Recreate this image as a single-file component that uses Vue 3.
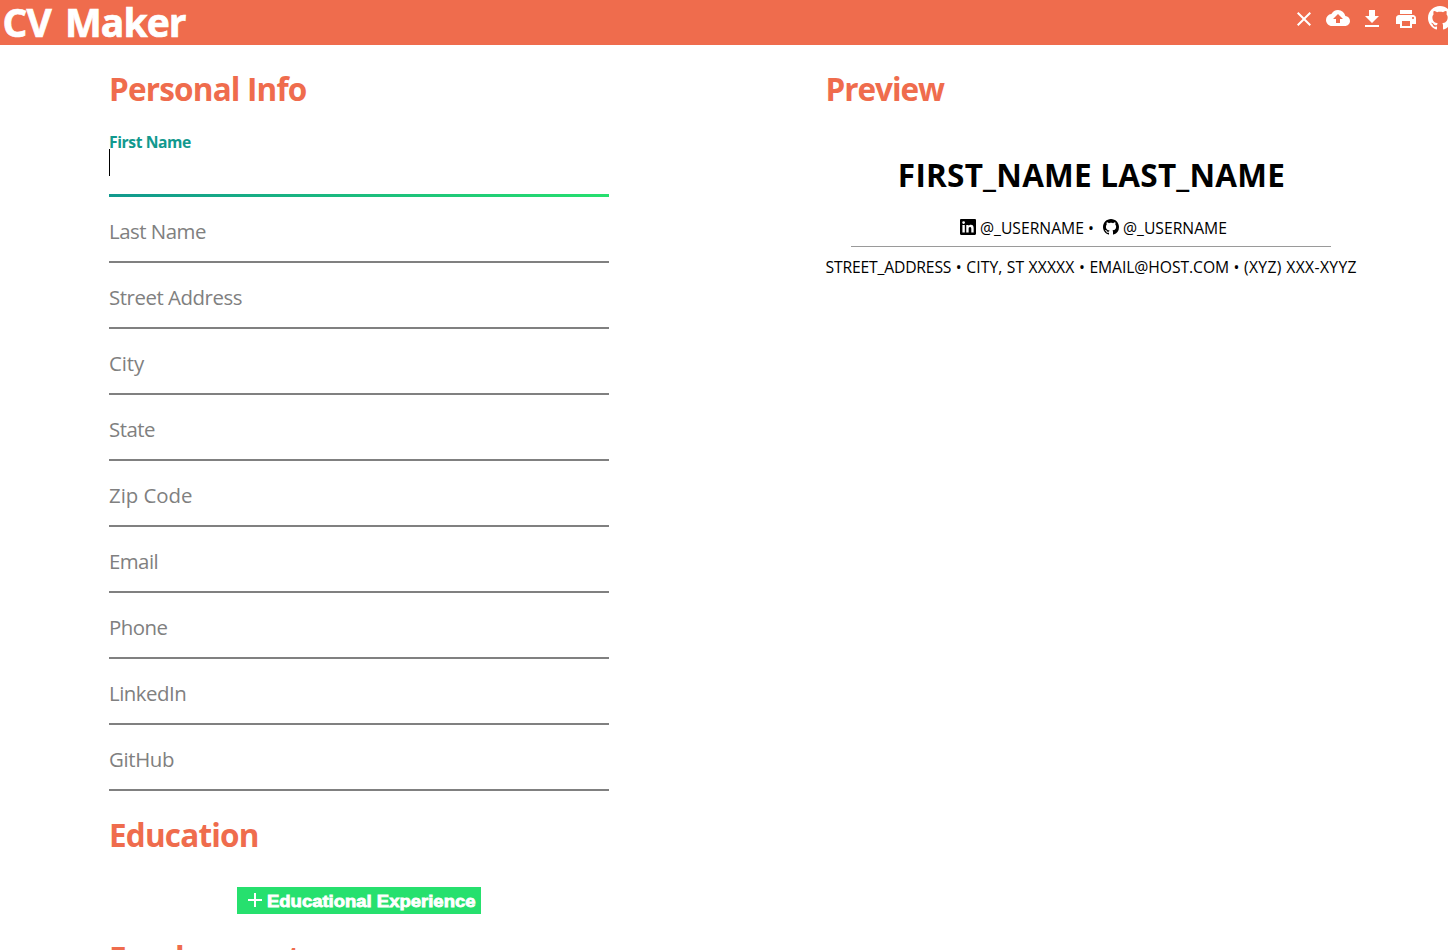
<script setup>
import { ref } from 'vue'

const fields = ref([
  { label: 'First Name', tracking: -0.42, active: true },
  { label: 'Last Name', tracking: -0.48 },
  { label: 'Street Address', tracking: -0.45 },
  { label: 'City', tracking: -0.1 },
  { label: 'State', tracking: -0.5 },
  { label: 'Zip Code', tracking: -0.03 },
  { label: 'Email', tracking: -0.55 },
  { label: 'Phone', tracking: -0.5 },
  { label: 'LinkedIn', tracking: -0.48 },
  { label: 'GitHub', tracking: -0.35 },
])

const contact = ref([
  { text: 'STREET_ADDRESS', tracking: -0.17 },
  { text: 'CITY, ST XXXXX', tracking: 0.14 },
  { text: 'EMAIL@HOST.COM', tracking: -0.07 },
  { text: '(XYZ) XXX-XYYZ', tracking: 0.36 },
])

const githubPath =
  'M8 0C3.58 0 0 3.58 0 8c0 3.54 2.29 6.53 5.47 7.59.4.07.55-.17.55-.38 0-.19-.01-.82-.01-1.49-2.01.37-2.53-.49-2.69-.94-.09-.23-.48-.94-.82-1.13-.28-.15-.68-.52-.01-.53.63-.01 1.08.58 1.23.82.72 1.21 1.87.87 2.33.66.07-.52.28-.87.51-1.07-1.78-.2-3.64-.89-3.64-3.95 0-.87.31-1.59.82-2.15-.08-.2-.36-1.02.08-2.12 0 0 .67-.21 2.2.82.64-.18 1.32-.27 2-.27.68 0 1.36.09 2 .27 1.53-1.04 2.2-.82 2.2-.82.44 1.1.16 1.92.08 2.12.51.56.82 1.27.82 2.15 0 3.07-1.87 3.75-3.65 3.95.29.25.54.73.54 1.48 0 1.07-.01 1.93-.01 2.2 0 .21.15.46.55.38A8.013 8.013 0 0 0 16 8c0-4.42-3.58-8-8-8z'
</script>

<template>
  <div class="page">
    <header class="bar">
      <h1 class="brand">CV Maker</h1>
      <nav class="tools">
        <svg viewBox="0 0 24 24"><path d="M19 6.41L17.59 5 12 10.59 6.41 5 5 6.41 10.59 12 5 17.59 6.41 19 12 13.41 17.59 19 19 17.59 13.41 12z" /></svg>
        <svg class="raised" viewBox="0 0 24 24"><path d="M19.35 10.04A7.49 7.49 0 0 0 12 4C9.11 4 6.6 5.64 5.35 8.04A5.994 5.994 0 0 0 0 14c0 3.31 2.69 6 6 6h13c2.76 0 5-2.24 5-5 0-2.64-2.05-4.78-4.65-4.96zM14 13v4h-4v-4H7l5-5 5 5h-3z" /></svg>
        <svg viewBox="0 0 24 24"><path d="M19 9h-4V3H9v6H5l7 7 7-7zM5 18v2h14v-2H5z" /></svg>
        <svg viewBox="0 0 24 24"><path d="M19 8H5c-1.66 0-3 1.34-3 3v6h4v4h12v-4h4v-6c0-1.66-1.34-3-3-3zm-3 11H8v-5h8v5zm3-7c-.55 0-1-.45-1-1s.45-1 1-1 1 .45 1 1-.45 1-1 1zm-1-9H6v4h12V3z" /></svg>
        <svg class="raised" viewBox="0 0 16 16"><path :d="githubPath" /></svg>
      </nav>
    </header>

    <main class="columns">
      <section class="form">
        <h2 class="heading">Personal Info</h2>
        <div class="fields">
          <div v-for="f in fields" :key="f.label" class="field" :class="{ active: f.active }">
            <span class="label" :style="{ letterSpacing: f.tracking + 'px' }">{{ f.label }}</span>
            <i v-if="f.active" class="caret"></i>
          </div>
        </div>
        <h2 class="heading">Education</h2>
        <button class="add">
          <svg viewBox="0 0 14 14"><path d="M7 0v14M0 7h14" /></svg>
          <span class="add-text">Educational Experience</span>
        </button>
        <h2 class="heading">Employment</h2>
      </section>

      <section class="preview">
        <h2 class="heading">Preview</h2>
        <h1 class="name">FIRST_NAME LAST_NAME</h1>
        <div class="social">
          <svg viewBox="0 0 16 16"><path fill-rule="evenodd" d="M1.200 0h13.600C15.500 0 16 .5 16 1.200v13.600c0 .7-.5 1.200-1.200 1.200H1.200C.5 16 0 15.500 0 14.800V1.200C0 .5.5 0 1.200 0zM2.400 6v7.600h2.400V6zM3.600 2.200a1.400 1.400 0 1 0 0 2.800 1.400 1.400 0 0 0 0-2.800zM6.250 6v7.600h2.400V9.850c0-1 .2-1.950 1.400-1.950s1.250 1.100 1.250 2v3.700h2.350V9.450c0-2.050-.45-3.650-2.850-3.650-1.150 0-1.900.65-2.250 1.250V6z" /></svg>
          <span class="user">@_USERNAME</span>
          <span class="dot">•</span>
          <svg viewBox="0 0 16 16"><path :d="githubPath" /></svg>
          <span class="user">@_USERNAME</span>
        </div>
        <hr class="rule" />
        <div class="address">
          <template v-for="(c, i) in contact" :key="c.text">
            <span v-if="i" class="sep">•</span>
            <span :style="{ letterSpacing: c.tracking + 'px' }">{{ c.text }}</span>
          </template>
        </div>
      </section>
    </main>
  </div>
</template>

<style>
body {
  overflow: hidden;
  background: #fff;
}
</style>

<style scoped>
.page {
  width: 1448px;
  height: 950px;
  overflow: hidden;
  font-family: "Segoe UI", "Open Sans", "Noto Sans", sans-serif;
  color: #000;
}
.bar {
  display: flex;
  justify-content: space-between;
  height: 45px;
  background: #ef6c4d;
  color: #fff;
}
.brand {
  margin: 0 0 0 2.500px;
  font-size: 39px;
  line-height: 44px;
  font-weight: 700;
  letter-spacing: -0.950px;
  word-spacing: 5px;
  -webkit-text-stroke: 0.700px currentColor;
  white-space: nowrap;
}
.tools {
  display: flex;
  flex: none;
  gap: 10px;
  padding-top: 7px;
  margin-right: -4px;
}
.tools svg {
  width: 24px;
  height: 24px;
  fill: currentColor;
}
.tools .raised {
  margin-top: -1px;
}
.columns {
  display: flex;
}
.form {
  width: 500px;
  margin-left: 109px;
  display: flex;
  flex-direction: column;
}
.heading {
  margin: 22px 0 0;
  height: 45px;
  font-size: 31.500px;
  line-height: 44px;
  font-weight: 700;
  letter-spacing: -0.820px;
  color: #ef6c4d;
  white-space: nowrap;
}
.fields {
  padding-top: 19px;
}
.field {
  position: relative;
  height: 64px;
  border-bottom: 2px solid gray;
  font-size: 20.400px;
  color: gray;
  white-space: nowrap;
}
.field .label {
  display: block;
  padding-top: 20px;
  line-height: 28px;
}
.field.active {
  height: 63px;
  border-bottom: 3px solid;
  border-image: linear-gradient(to right, #11998e, #26e06e) 1;
}
.field.active .label {
  padding-top: 0;
  font-size: 15.700px;
  line-height: 22px;
  font-weight: 700;
  color: #11998e;
}
.caret {
  position: absolute;
  left: 0;
  top: 18px;
  width: 1px;
  height: 27px;
  background: #000;
}
.add {
  display: flex;
  align-items: center;
  align-self: center;
  width: 244px;
  height: 27px;
  margin-top: 29px;
  padding: 0 0 0 11px;
  gap: 5px;
  border: 0;
  background: #26e06e;
  color: #fff;
  font: 700 16px/25px "Liberation Sans", Arial, sans-serif;
  white-space: nowrap;
}
.add svg {
  flex: none;
  width: 14px;
  height: 14px;
  margin-top: -1px;
  fill: none;
  stroke: currentColor;
  stroke-width: 2;
}
.add-text {
  padding-top: 2px;
  transform: scaleX(1.155);
  transform-origin: left center;
  -webkit-text-stroke: 0.800px currentColor;
}
.preview {
  width: 531px;
  margin-left: 217px;
}
.preview .heading {
  margin-left: -0.500px;
  letter-spacing: -1.050px;
}
.name {
  margin: 41px 0 0;
  font-size: 31.500px;
  line-height: 44px;
  font-weight: 700;
  letter-spacing: 0.230px;
  text-align: center;
  white-space: nowrap;
}
.social {
  display: flex;
  align-items: flex-start;
  margin: 22px 0 0 134px;
  height: 27px;
  font-size: 15.700px;
  line-height: 18px;
}
.social svg {
  flex: none;
  width: 16px;
  height: 16px;
}
.user {
  width: 103px;
  margin-left: 4px;
  white-space: nowrap;
}
.dot {
  width: 6px;
  margin: 0 9px 0 5px;
}
.rule {
  width: 480px;
  height: 1px;
  margin: 0 25px;
  border: 0;
  background: #9a9a9a;
}
.address {
  display: flex;
  justify-content: space-between;
  margin: 9px 0 0 -0.500px;
  font-size: 15.700px;
  line-height: 22px;
  white-space: nowrap;
}
</style>
